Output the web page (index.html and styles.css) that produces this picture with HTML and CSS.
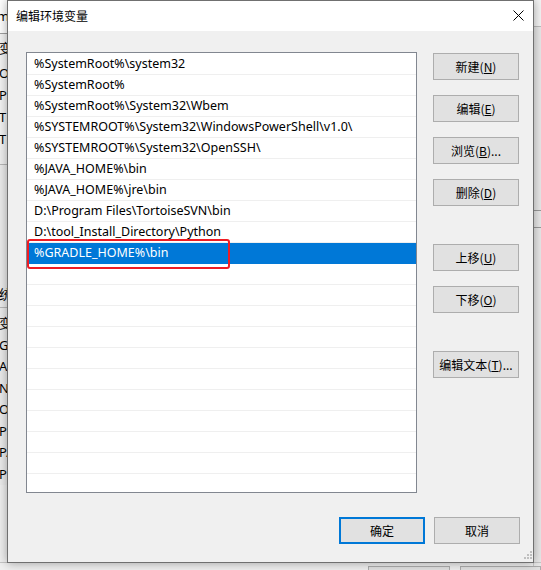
FILE: index.html
```html
<!DOCTYPE html>
<html lang="zh-CN">
<head>
<meta charset="utf-8">
<title>编辑环境变量</title>
<link rel="stylesheet" href="styles.css">
</head>
<body>
<div class="desk">
  <div class="bg-left">
    <div class="bl-head">m</div>
    <div class="bl-group">
      <div class="bl-row">变</div>
      <div class="bl-row">O</div>
      <div class="bl-row">Pa</div>
      <div class="bl-row">TE</div>
      <div class="bl-row">TM</div>
    </div>
    <div class="bl-gap"></div>
    <div class="bl-group second">
      <div class="bl-row title-row">统</div>
      <div class="bl-row">变</div>
      <div class="bl-row">G</div>
      <div class="bl-row">A</div>
      <div class="bl-row">N</div>
      <div class="bl-row">O</div>
      <div class="bl-row">Pa</div>
      <div class="bl-row">PA</div>
      <div class="bl-row">PF</div>
    </div>
  </div>
  <div class="bg-right">
    <div class="br-a"></div>
    <div class="br-b"></div>
    <div class="br-c"></div>
  </div>
  <div class="bg-bottom">
    <span class="bg-btn"></span><span class="bg-btn"></span>
  </div>
</div>

<div class="dialog">
  <div class="titlebar">
    <span class="title">编辑环境变量</span>
    <svg class="close" width="11" height="11" viewBox="0 0 11 11"><path d="M0.5 0.5 L10.5 10.5 M10.5 0.5 L0.5 10.5" stroke="#000" stroke-width="1"/></svg>
  </div>
  <div class="body">
    <div class="main">
      <div class="list">
        <div class="row">%SystemRoot%\system32</div>
        <div class="row">%SystemRoot%</div>
        <div class="row">%SystemRoot%\System32\Wbem</div>
        <div class="row">%SYSTEMROOT%\System32\WindowsPowerShell\v1.0\</div>
        <div class="row">%SYSTEMROOT%\System32\OpenSSH\</div>
        <div class="row">%JAVA_HOME%\bin</div>
        <div class="row">%JAVA_HOME%\jre\bin</div>
        <div class="row">D:\Program Files\TortoiseSVN\bin</div>
        <div class="row">D:\tool_Install_Directory\Python</div>
        <div class="row selected">%GRADLE_HOME%\bin</div>
        <div class="row"></div><div class="row"></div><div class="row"></div>
        <div class="row"></div><div class="row"></div><div class="row"></div>
        <div class="row"></div><div class="row"></div><div class="row"></div>
        <div class="row"></div><div class="row"></div>
      </div>
      <div class="side">
        <button class="btn">新建(<u>N</u>)</button>
        <button class="btn">编辑(<u>E</u>)</button>
        <button class="btn">浏览(<u>B</u>)...</button>
        <button class="btn">删除(<u>D</u>)</button>
        <button class="btn spaced">上移(<u>U</u>)</button>
        <button class="btn">下移(<u>O</u>)</button>
        <button class="btn spaced">编辑文本(<u>T</u>)...</button>
      </div>
    </div>
    <div class="footer">
      <button class="btn default">确定</button>
      <button class="btn">取消</button>
    </div>
    <div class="grip">
      <i class="d1"></i><i class="d2"></i><i class="d3"></i><i class="d4"></i><i class="d5"></i><i class="d6"></i>
    </div>
  </div>
</div>
<div class="mark"></div>
</body>
</html>
```
FILE: styles.css
```css
* { box-sizing: border-box; }
html, body { margin: 0; padding: 0; }
body {
  width: 541px;
  height: 570px;
  overflow: hidden;
  position: relative;
  background: #f0f0f0;
  font-family: "Noto Sans", "Noto Sans CJK SC", sans-serif;
}
.desk {
  width: 541px;
  height: 570px;
  display: flex;
  position: relative;
}
.bg-left {
  width: 12px;
  display: flex;
  flex-direction: column;
  font-size: 13px;
  color: #000;
  overflow: hidden;
}
.bl-head {
  height: 34px;
  background: #fff;
  border-bottom: 1px solid #a0a0a0;
  padding-top: 7px;
  line-height: 18px;
  text-indent: -3px;
}
.bl-group {
  background: #f4f4f4;
  padding-top: 3px;
}
.bl-row {
  height: 22px;
  line-height: 22px;
  white-space: nowrap;
  text-indent: -1px;
}
.bl-group .bl-row:first-child { height: 25px; }
.bl-gap {
  height: 120px;
  border-top: 1px solid #b8b8b8;
  margin-top: 14px;
  background: #ececec;
}
.bl-group.second {
  padding-top: 0;
  background: #ececec;
}
.bl-group.second .bl-row { height: 21.5px; line-height: 21.5px; }
.bl-group.second .title-row {
  height: 24px;
  border-bottom: 1px solid #b8b8b8;
  margin-bottom: 5px;
}
.bg-right {
  position: absolute;
  right: 0;
  top: 0;
  width: 8px;
  height: 570px;
  background: #e9e9e9;
  border-left: 1px solid #c8c8c8;
}
.br-a { height: 27px; background: #f5f5f5; border-bottom: 1px solid #bdbdbd; }
.br-b { height: 184px; border-bottom: 1px solid #9a9a9a; }
.br-c { height: 17px; border-bottom: 1px solid #9a9a9a; }
.bg-bottom {
  position: absolute;
  left: 0;
  bottom: 0;
  width: 541px;
  height: 8px;
  display: flex;
  gap: 10px;
  padding-left: 368px;
  border-top: 1px solid #c6c6c6;
}
.bg-btn {
  width: 85px;
  height: 8px;
  margin-top: 3px;
  background: #e1e1e1;
  border: 1px solid #adadad;
}

.dialog {
  position: absolute;
  left: 7px;
  top: 0;
  width: 527px;
  height: 563px;
  border: 1px solid #707070;
  background: #f0f0f0;
  box-shadow: 0 0 10px rgba(0,0,0,0.35);
  display: flex;
  flex-direction: column;
}
.titlebar {
  height: 30px;
  background: #fff;
  display: flex;
  align-items: center;
  justify-content: space-between;
  padding: 0 9px 0 8px;
  flex-shrink: 0;
}
.title {
  font-family: "Noto Sans CJK SC", sans-serif;
  font-size: 12px;
  color: #000;
  line-height: 16px;
  margin-top: -1px;
}
.close { display: block; margin-top: -1px; }
.body {
  flex: 1;
  position: relative;
  padding: 21px 13px 0 18px;
}
.main {
  display: flex;
  gap: 16px;
}
.list {
  width: 391px;
  height: 441px;
  border: 1px solid #828790;
  background: #fff;
  overflow: hidden;
  padding-top: 1px;
}
.row {
  height: 21px;
  border-bottom: 1px solid #efefef;
  padding-left: 7px;
  font-size: 12.5px;
  line-height: 20px;
  color: #000;
  white-space: nowrap;
}
.row.selected {
  background: #0078d7;
  color: #fff;
  border-bottom-color: #0078d7;
}
.side {
  width: 86px;
  display: flex;
  flex-direction: column;
  gap: 15px;
  padding-top: 1px;
}
.btn {
  width: 86px;
  height: 27px;
  background: #e1e1e1;
  border: 1px solid #adadad;
  font-family: "Noto Sans CJK SC", sans-serif;
  font-size: 12px;
  color: #000;
  padding: 0;
  line-height: 16px;
  white-space: nowrap;
}
.btn u { text-underline-offset: 1px; }
.btn.spaced { margin-top: 23px; }
.footer {
  display: flex;
  justify-content: flex-end;
  gap: 9px;
  margin-top: 24px;
}
.btn.default {
  border: 2px solid #0078d7;
}
.grip {
  position: absolute;
  right: 1px;
  bottom: 1px;
  width: 10px;
  height: 10px;
}
.grip i {
  position: absolute;
  width: 2px;
  height: 2px;
  background: #bfbfbf;
}
.grip .d1 { right: 0; top: 0; }
.grip .d2 { right: 0; top: 3px; }
.grip .d3 { right: 3px; top: 3px; }
.grip .d4 { right: 0; top: 6px; }
.grip .d5 { right: 3px; top: 6px; }
.grip .d6 { right: 6px; top: 6px; }

.mark {
  position: absolute;
  left: 27px;
  top: 239px;
  width: 203px;
  height: 30px;
  border: 2.5px solid #ee1c24;
  border-radius: 3px;
}
```
